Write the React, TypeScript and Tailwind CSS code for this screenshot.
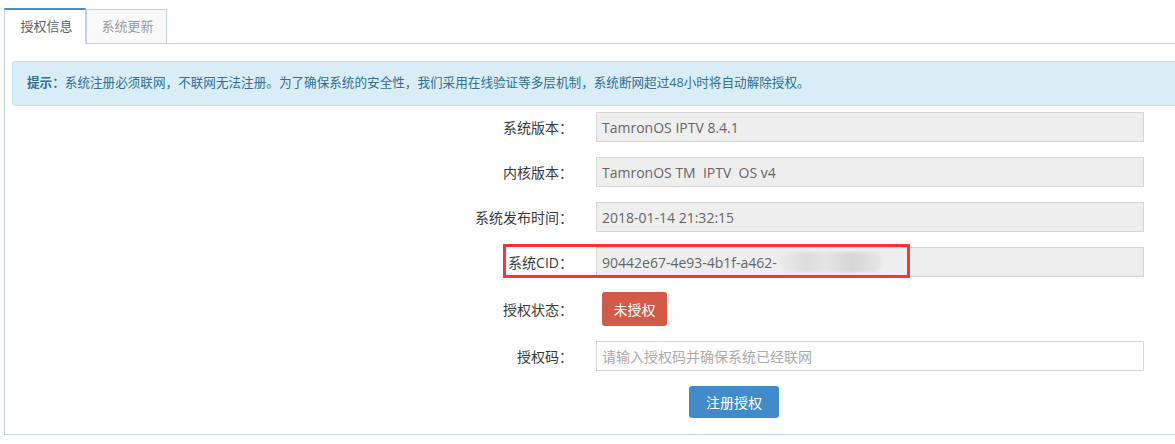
import React from 'react';

const font = { fontFamily: '"Open Sans", "Noto Sans CJK SC", sans-serif' };

function ReadonlyRow({ label, value, children }: { label: string; value: string; children?: React.ReactNode }) {
  return (
    <div className="flex items-center h-[30px]">
      <div className="w-[568px] text-right text-[14px] text-[#393939]">{label}</div>
      <div className="ml-[23px] w-[548px] h-[30px] flex items-center px-[5px] bg-[#eeeeee] border border-[#d5d5d5] text-[14px] text-[#666] whitespace-pre">
        {value}
        {children}
      </div>
    </div>
  );
}

export default function App() {
  return (
    <div className="w-[1175px] h-[444px] overflow-hidden bg-white" style={font}>
      <div className="pl-[4px] pt-[8px] w-[1210px]">
        {/* tabs */}
        <div className="flex items-end h-[36px] border-b border-[#c5d0dc]">
          <div className="-mb-px h-[36px] w-[82px] flex items-center justify-center pl-[3px] bg-white border-t-2 border-t-[#4c8fbd] border-x border-[#c5d0dc] text-[13px] text-[#576373]">
            授权信息
          </div>
          <div className="-mb-px h-[35px] w-[81px] flex items-center justify-center pl-[2px] bg-[#f9f9f9] border border-[#c5d0dc] text-[13px] text-[#999]">
            系统更新
          </div>
        </div>

        {/* panel */}
        <div className="border-l border-b border-[#c5d0dc] pt-[17px] pb-[16px]">
          <div className="mx-[7px] h-[45px] flex items-center pl-[14px] bg-[#d9edf7] border border-[#bce8f1] rounded-[3px] text-[12.6px] text-[#31708f]">
            <b className="font-bold">提示：</b>
            系统注册必须联网，不联网无法注册。为了确保系统的安全性，我们采用在线验证等多层机制，系统断网超过48小时将自动解除授权。
          </div>

          <div className="mt-[6px] flex flex-col gap-[15px]">
            <ReadonlyRow label="系统版本：" value="TamronOS IPTV 8.4.1" />
            <ReadonlyRow label="内核版本：" value="TamronOS TM  IPTV  OS v4" />
            <ReadonlyRow label="系统发布时间：" value="2018-01-14 21:32:15" />
            <div className="relative">
              <ReadonlyRow label="系统CID：" value="90442e67-4e93-4b1f-a462-">
                <span className="inline-block ml-[3px] w-[102px] h-[20px] rounded-full blur-[1.5px] bg-[linear-gradient(90deg,#ebebeb_0%,#dcdcdc_25%,#e4e4e4_45%,#d6d6d6_70%,#e6e6e6_100%)]" />
              </ReadonlyRow>
              {/* annotation box */}
              <div className="absolute left-[498px] top-[-3px] w-[407px] h-[34px] border-[3px] border-[#fb3438]" />
            </div>

            <div className="flex items-center h-[34px]">
              <div className="w-[568px] text-right text-[14px] text-[#393939]">授权状态：</div>
              <div className="ml-[29px] w-[65px] h-[34px] flex items-center justify-center rounded-[3px] bg-[#d15b47] text-white text-[14px]">
                未授权
              </div>
            </div>

            <div className="flex items-center h-[30px]">
              <div className="w-[568px] text-right text-[14px] text-[#393939]">授权码：</div>
              <input
                className="ml-[23px] w-[548px] h-[30px] px-[5px] bg-white border border-[#d5d5d5] text-[14px] text-[#666] placeholder:text-[#aaa] outline-none"
                placeholder="请输入授权码并确保系统已经联网"
                style={font}
              />
            </div>

            <div className="flex items-center h-[32px]">
              <div className="ml-[684px] w-[90px] h-[32px] flex items-center justify-center rounded-[3px] bg-[#428bca] text-white text-[14px]">
                注册授权
              </div>
            </div>
          </div>
        </div>
      </div>
    </div>
  );
}
